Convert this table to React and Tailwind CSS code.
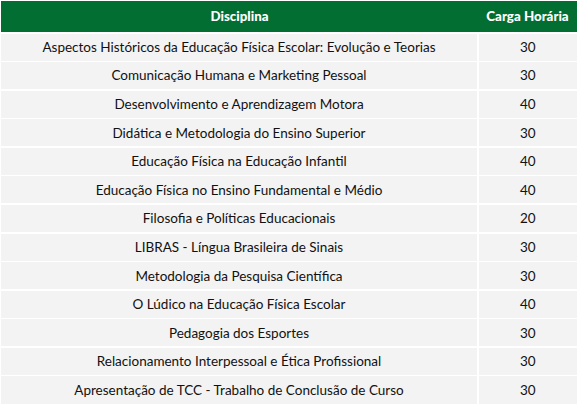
const rows = [
  ['Aspectos Históricos da Educação Física Escolar: Evolução e Teorias', 30],
  ['Comunicação Humana e Marketing Pessoal', 30],
  ['Desenvolvimento e Aprendizagem Motora', 40],
  ['Didática e Metodologia do Ensino Superior', 30],
  ['Educação Física na Educação Infantil', 40],
  ['Educação Física no Ensino Fundamental e Médio', 40],
  ['Filosofia e Políticas Educacionais', 20],
  ['LIBRAS - Língua Brasileira de Sinais', 30],
  ['Metodologia da Pesquisa Científica', 30],
  ['O Lúdico na Educação Física Escolar', 40],
  ['Pedagogia dos Esportes', 30],
  ['Relacionamento Interpessoal e Ética Profissional', 30],
  ['Apresentação de TCC - Trabalho de Conclusão de Curso', 30],
];

export default function App() {
  return (
    <div className="w-[577px] h-[404px] overflow-hidden bg-white pt-[1px] pl-[1px] font-['Lato',sans-serif] text-[#111]">
      <div className="flex flex-col gap-[1.5px]">
        <div className="flex h-[31px] items-center bg-[#036e32] text-white font-black text-[13.3px]">
          <div className="w-[477px] text-center">Disciplina</div>
          <div className="flex-1 text-center">Carga Horária</div>
        </div>
        {rows.map(([name, h], i) => (
          <div key={i} className="flex h-[27.08px] gap-[1.5px] text-[13.5px]">
            <div className="w-[476px] flex items-center justify-center bg-[#f3f3f3]">{name}</div>
            <div className="flex-1 flex items-center justify-center bg-[#f3f3f3]">{h}</div>
          </div>
        ))}
      </div>
    </div>
  );
}
